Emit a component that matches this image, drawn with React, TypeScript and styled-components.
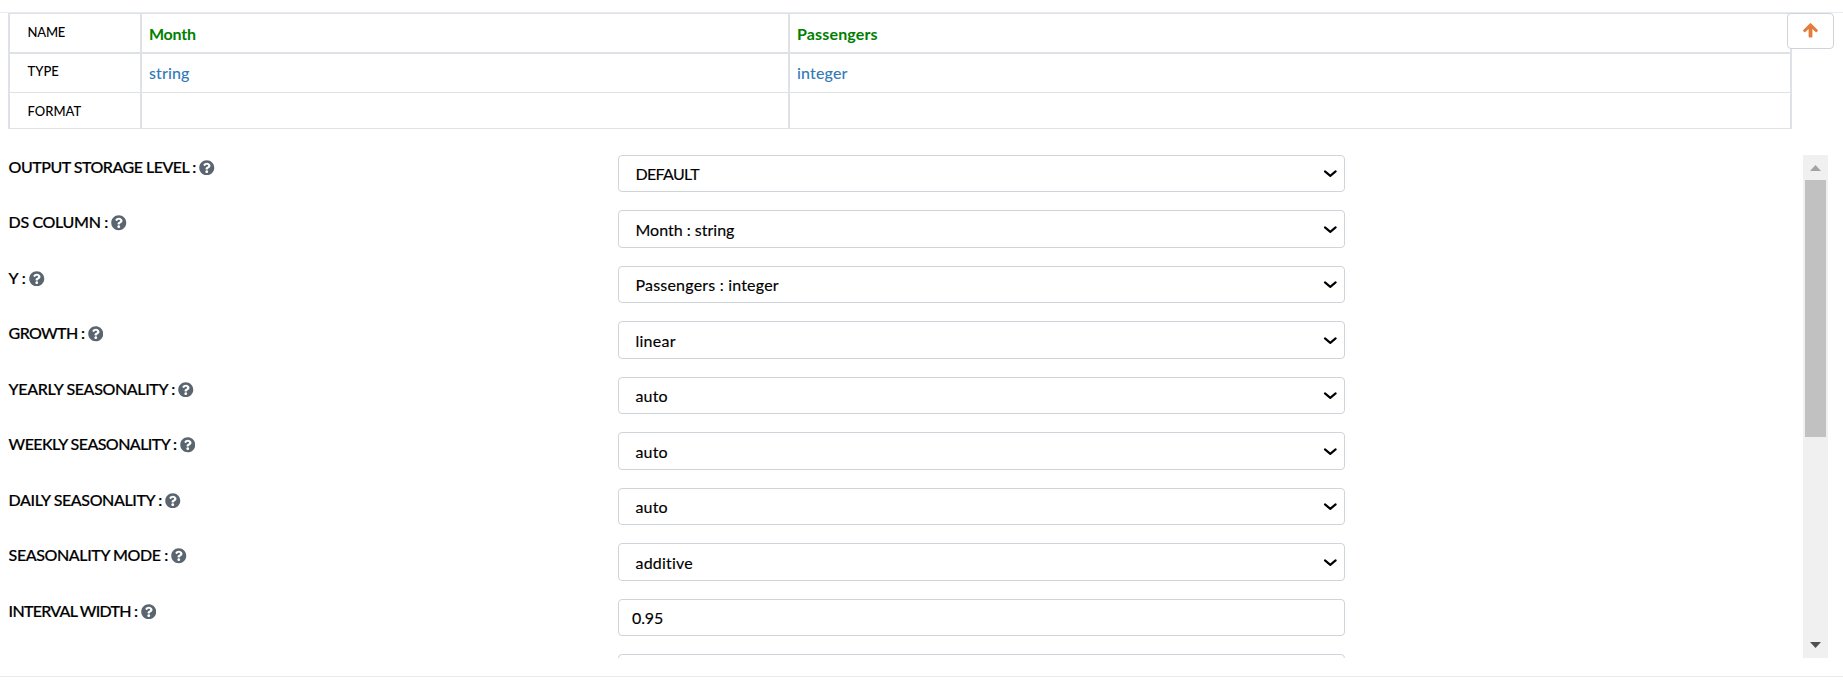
import React from 'react';
import styled, { createGlobalStyle } from 'styled-components';
import { FaQuestionCircle } from 'react-icons/fa';

const GlobalStyle = createGlobalStyle`
  * { box-sizing: border-box; }
  body {
    margin: 0;
    background: #fff;
    color: #000;
    font-family: Lato, "Liberation Sans", sans-serif;
    font-size: 16px;
    font-weight: 400;
    font-variant-ligatures: none;
    overflow: hidden;
  }
`;

const Page = styled.div`
  height: 690px;
  padding-top: 12px;
`;

const Panel = styled.section`
  position: relative;
  height: 665px;
  border-top: 1px solid #e9ecef;
  border-bottom: 1px solid #e6e9ed;
`;

const Schema = styled.div`
  display: grid;
  grid-template-columns: 132px 648px 1fr;
  grid-template-rows: 40px 39px 36px;
  width: 1784px;
  margin-left: 8px;
  border-right: 2px solid #dee2e6;
  border-top: 1px solid #dee2e6;
`;

const Cell = styled.div<{ $line?: number }>`
  border-left: 2px solid #dee2e6;
  border-bottom: ${(p) => p.$line ?? 1}px solid #dee2e6;
  white-space: nowrap;
`;

const HeadCell = styled(Cell)<{ $top: number }>`
  padding: ${(p) => p.$top}px 0 0 17.5px;
  font-size: 13px;
  font-weight: 500;
  line-height: 18px;
`;

const NameCell = styled(Cell)`
  padding: 10px 0 0 7px;
  font-weight: 700;
  line-height: 20px;
  color: #008000;
`;

const TypeCell = styled(Cell)`
  padding: 9px 0 0 7px;
  font-weight: 500;
  line-height: 20px;
  color: #337ab7;
`;

const Spaced = styled.span<{ $ls?: number }>`
  letter-spacing: ${(p) => p.$ls ?? 0}px;
  white-space: pre;
`;

const UpButton = styled.button`
  position: absolute;
  top: 0;
  right: 9px;
  display: flex;
  align-items: center;
  justify-content: center;
  width: 47px;
  height: 36px;
  padding: 0 1px 2px 0;
  background: #fff;
  border: 1px solid #ced4da;
  border-radius: 4px;
  color: #e47c3c;
`;

const Body = styled.div`
  display: flex;
  justify-content: space-between;
  height: 503px;
  margin: 26px 15px 0 8px;
  overflow: hidden;
`;

const Fields = styled.div`
  margin-top: -0.2px;
`;

const Field = styled.div`
  display: grid;
  grid-template-columns: 610px 727px;
  height: 55.5px;
`;

const Label = styled.label`
  display: flex;
  align-items: center;
  gap: 3.4px;
  height: 25px;
  padding-left: 0.6px;
  font-weight: 500;
  -webkit-text-stroke: 0.2px #000;

  span {
    padding-bottom: 2px;
  }

  svg {
    width: 15.5px;
    height: 15.5px;
    color: #5a6570;
    stroke: none;
  }
`;

const Control = styled.div<{ $input?: boolean }>`
  display: flex;
  align-items: center;
  justify-content: space-between;
  height: 37.5px;
  padding: 0 7px 0 ${(p) => (p.$input ? 13 : 16.5)}px;
  border: 1px solid #ced4da;
  border-radius: 4px;
  -webkit-text-stroke: 0.15px #000;

  svg {
    margin-top: 1px;
  }
`;

const Scrollbar = styled.div`
  display: flex;
  flex-direction: column;
  width: 25px;
  height: 503px;
  background: #f0f0f0;
`;

const ScrollArrow = styled.svg`
  display: block;
  flex: none;
  width: 25px;
  height: 25px;
`;

const Thumb = styled.div`
  width: 21px;
  height: 257px;
  margin: 0 2px auto;
  background: #c1c1c1;
`;

const Chevron = () => (
  <svg width="14" height="10" viewBox="0 0 14 10" fill="none">
    <path d="M2 2.4 L7.3 6.9 L12.6 2.4" stroke="#000" strokeWidth="2.1" strokeLinecap="round" strokeLinejoin="round" />
  </svg>
);

type FieldData = { label?: string; ls?: number; value?: string; vls?: number; input?: boolean };

const fields: FieldData[] = [
  { label: 'OUTPUT STORAGE LEVEL :', ls: -0.5, value: 'DEFAULT', vls: -0.65 },
  { label: 'DS COLUMN :', ls: -0.34, value: 'Month : string', vls: 0 },
  { label: 'Y :', ls: -0.1, value: 'Passengers : integer', vls: 0.2 },
  { label: 'GROWTH :', ls: -0.62, value: 'linear', vls: 0.25 },
  { label: 'YEARLY SEASONALITY :', ls: -0.38, value: 'auto', vls: 0.15 },
  { label: 'WEEKLY SEASONALITY :', ls: -0.57, value: 'auto', vls: 0.15 },
  { label: 'DAILY SEASONALITY :', ls: -0.4, value: 'auto', vls: 0.15 },
  { label: 'SEASONALITY MODE :', ls: -0.4, value: 'additive', vls: 0.2 },
  { label: 'INTERVAL WIDTH :', ls: -0.73, value: '0.95', vls: -0.1, input: true },
  { input: true },
];

export default function App() {
  return (
    <>
      <GlobalStyle />
      <Page>
        <Panel>
          <Schema>
            <HeadCell $line={2} $top={9}><Spaced $ls={-0.2}>NAME</Spaced></HeadCell>
            <NameCell $line={2}><Spaced $ls={-0.25}>Month</Spaced></NameCell>
            <NameCell $line={2}><Spaced $ls={0.15}>Passengers</Spaced></NameCell>
            <HeadCell $top={8}><Spaced>TYPE</Spaced></HeadCell>
            <TypeCell><Spaced $ls={0.1}>string</Spaced></TypeCell>
            <TypeCell><Spaced $ls={0.15}>integer</Spaced></TypeCell>
            <HeadCell $top={9}><Spaced>FORMAT</Spaced></HeadCell>
            <Cell />
            <Cell />
          </Schema>
          <UpButton aria-label="Scroll to top">
            <svg width="15" height="15" viewBox="0 0 15 15" fill="currentColor">
              <path d="M6.8 0.4 Q7.5 -0.2 8.2 0.4 L14.7 6.9 Q15.2 7.5 14.7 8.1 L13.8 9 Q13.2 9.5 12.6 9 L9.4 5.9 V13.6 Q9.4 14.5 8.5 14.5 H6.5 Q5.6 14.5 5.6 13.6 V5.9 L2.4 9 Q1.8 9.5 1.2 9 L0.3 8.1 Q-0.2 7.5 0.3 6.9 Z" />
            </svg>
          </UpButton>
          <Body>
            <Fields>
              {fields.map((f, i) => (
                <Field key={i}>
                  <Label>
                    {f.label && (
                      <>
                        <Spaced $ls={f.ls}>{f.label}</Spaced>
                        <FaQuestionCircle />
                      </>
                    )}
                  </Label>
                  <Control $input={f.input}>
                    <Spaced $ls={f.vls}>{f.value}</Spaced>
                    {!f.input && <Chevron />}
                  </Control>
                </Field>
              ))}
            </Fields>
            <Scrollbar>
              <ScrollArrow viewBox="0 0 25 25">
                <path d="M7 16 L12.5 10 L18 16 Z" fill="#a3a3a3" />
              </ScrollArrow>
              <Thumb />
              <ScrollArrow viewBox="0 0 25 25">
                <path d="M7 9 L12.5 15 L18 9 Z" fill="#505050" />
              </ScrollArrow>
            </Scrollbar>
          </Body>
        </Panel>
      </Page>
    </>
  );
}
